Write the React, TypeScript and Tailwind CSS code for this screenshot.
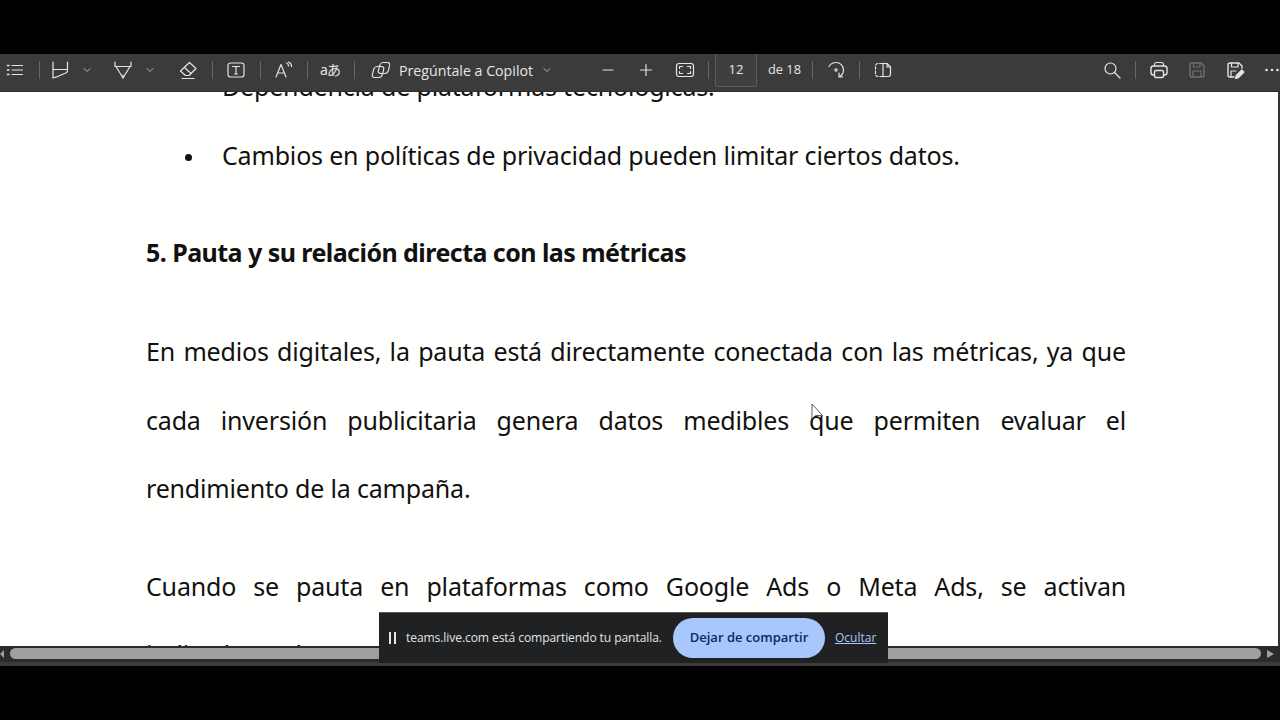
const Sep = ({ ml }: { ml: string }) => <div className={`${ml} w-px h-[18px] bg-[#666666] shrink-0`} />;

const Ico = ({ ml, children, dim }: { ml: string; children: React.ReactNode; dim?: boolean }) => (
  <svg viewBox="0 0 20 20" fill="none" stroke={dim ? "#6f6f6f" : "#e4e4e4"} strokeWidth="1.2" strokeLinecap="round" strokeLinejoin="round" className={`${ml} w-5 h-5 shrink-0`}>
    {children}
  </svg>
);

const Chev = ({ ml }: { ml: string }) => (
  <svg viewBox="0 0 10 10" fill="none" stroke="#b5b5b5" strokeWidth="1" strokeLinecap="round" strokeLinejoin="round" className={`${ml} w-2.5 h-2.5 shrink-0`}>
    <path d="M2 3.5 5 6.5 8 3.5" />
  </svg>
);

function Toolbar() {
  return (
    <div className="h-[38px] shrink-0 bg-[#3b3b3b] border-b border-[#2c2c2c] flex items-center pl-[5px] pb-[6px] overflow-hidden text-[#e6e6e6] font-['Open_Sans',sans-serif]">
      <Ico ml="ml-0"><path d="M7 5.500h10.500M7 10h10.500M7 14.500h10.500" /><path d="M2.500 5.500h1.500M2.500 10h1.500M2.500 14.500h1.500" strokeWidth="1.600" /></Ico>
      <Sep ml="ml-[14px]" />
      <Ico ml="ml-[10px]"><path d="M3 2v16l3-.8 10.800-4.700.7-2V2" /><path d="M3 9.500h14.500" /></Ico>
      <Chev ml="ml-[12px]" />
      <Ico ml="ml-[21px]"><path d="M2 2v4.500h16V2" /><path d="M3 6.500 10 18l7-11.500" /><path d="M10 18v-3" /></Ico>
      <Chev ml="ml-[12px]" />
      <Ico ml="ml-[23px]"><path d="M11.500 2.500 18 8.500l-7 7H7.500L2.500 11z" /><path d="M6.500 7.500l6.500 6" /><path d="M4 18.500h12" /></Ico>
      <Sep ml="ml-[14px]" />
      <Ico ml="ml-[13px]"><rect x="2" y="3" width="16" height="14" rx="2.500" /><path d="M6.500 6.500h7M10 6.500v7.500M8.500 14h3" /></Ico>
      <Sep ml="ml-[14px]" />
      <Ico ml="ml-[13px]"><path d="M2 17 7 4.500 12 17M3.700 13h6.600" /><path d="M12.500 3c1.500.5 2 1.700 2 3M14.500 2c2 .8 3 2.500 3 4.500" /></Ico>
      <Sep ml="ml-[13px]" />
      <div className="ml-[12px] w-5 shrink-0 text-[14px] leading-5 whitespace-nowrap text-center tracking-[-1px] font-['Noto_Sans','Noto_Sans_CJK_JP',sans-serif]">aあ</div>
      <Sep ml="ml-[14px]" />
      <Ico ml="ml-[15px]"><rect x="2.500" y="6.500" width="10" height="11" rx="3" transform="skewX(-14) translate(3.500 0)" /><rect x="8.500" y="2.500" width="10" height="11" rx="3" transform="skewX(-14) translate(2.500 0)" /></Ico>
      <div className="ml-[9px] w-[135px] shrink-0 text-[14.200px] leading-5 pt-[2px] whitespace-nowrap">Pregúntale a Copilot</div>
      <Chev ml="ml-[8px]" />
      <Ico ml="ml-[46px]"><path d="M5 10h10" /></Ico>
      <Ico ml="ml-[18px]"><path d="M4.500 10h11M10 4.500v11" /></Ico>
      <Ico ml="ml-[19px]"><rect x="1.500" y="3.500" width="17" height="13" rx="2.500" /><path d="M4.500 8.500v-2h3M15.500 8.500v-2h-3M4.500 11.500v2h3M15.500 11.500v2h-3" /></Ico>
      <Sep ml="ml-[13px]" />
      <div className="ml-[6px] w-[42px] h-[33px] self-start shrink-0 bg-[#3f3f3f] border-x border-b border-[#5a5a5a] rounded-b-[2px] flex items-center justify-center text-[13px]">12</div>
      <div className="ml-[11px] w-[32px] shrink-0 text-[12.800px] whitespace-nowrap">de 18</div>
      <Sep ml="ml-[12px]" />
      <Ico ml="ml-[13px]"><path d="M3 6.500C4.500 4 7 2.500 10 2.500c4 0 7.500 3.300 7.500 7.500 0 3-1.700 5.300-4 6.500" /><circle cx="10" cy="10" r="1.100" /><path d="M13 13v3.800h3.500" /></Ico>
      <Sep ml="ml-[13px]" />
      <Ico ml="ml-[13px]"><path d="M9 3.500H5A2.500 2.500 0 0 0 2.500 6v8A2.500 2.500 0 0 0 5 16.500h4" strokeDasharray="2.500 1.800" /><path d="M10 3v14M10 3.500h4l3.500 3.500v7a2.500 2.500 0 0 1-2.500 2.500h-5" /><path d="M14 3.500V7h3.500" /></Ico>
      <Ico ml="ml-[209px]"><circle cx="8.500" cy="8.500" r="5.500" /><path d="M12.500 12.500 18 18" /></Ico>
      <Sep ml="ml-[13px]" />
      <Ico ml="ml-[13px]"><path d="M5.500 6V4.500A2 2 0 0 1 7.500 2.500h5a2 2 0 0 1 2 2V6" /><rect x="2" y="6" width="16" height="9" rx="2.500" strokeWidth="1.400" /><rect x="5.500" y="10.500" width="9" height="7" rx="1.500" fill="#3b3b3b" strokeWidth="1.400" /></Ico>
      <Ico ml="ml-[18px]" dim><path d="M3 5a2 2 0 0 1 2-2h9l3 3v9a2 2 0 0 1-2 2H5a2 2 0 0 1-2-2z" strokeWidth="1.400" /><path d="M6.500 3v4h6.500V3M6 17v-6h8v6" /></Ico>
      <Ico ml="ml-[18px]"><path d="M9 17H5a2 2 0 0 1-2-2V5a2 2 0 0 1 2-2h9l3 3v2" strokeWidth="1.400" /><path d="M6.500 3v4h6.500V3M6 17v-6h5" /><path d="M10.500 18.500l.8-3 5.500-5.500 2.200 2.200-5.500 5.500z" fill="#e4e4e4" /></Ico>
      <svg viewBox="0 0 20 20" fill="#e4e4e4" className="ml-[17px] w-5 h-5 shrink-0"><circle cx="4.500" cy="10" r="1.300" /><circle cx="10" cy="10" r="1.300" /><circle cx="15.500" cy="10" r="1.300" /></svg>
    </div>
  );
}

const docFont = "font-['Noto_Sans',sans-serif] text-[25px] leading-[40px] text-[#111] h-10 whitespace-nowrap";

const Bullet = ({ mt, children }: { mt: string; children: string }) => (
  <div className={`${mt} flex items-center pl-[185px]`}>
    <div className="w-[7px] h-[7px] rounded-full bg-[#111] shrink-0 mt-[4px]" />
    <div className={`ml-[30px] ${docFont} tracking-[-0.18px]`}>{children}</div>
  </div>
);

const Just = ({ mt, children, last }: { mt: string; children: string; last?: boolean }) => (
  <div className={`${mt} mx-[146px] w-[980px] ${docFont} ${last ? "" : "[text-align-last:justify]"} tracking-[-0.18px]`}>{children}</div>
);

function ShareBar() {
  return (
    <div className="absolute left-[379px] top-[612px] w-[509px] h-[51px] bg-[#202122] border-t border-[#555] flex items-center pl-[10px] font-['Open_Sans',sans-serif]">
      <div className="w-[2px] h-[12px] bg-[#e6e6e6]" />
      <div className="ml-[3px] w-[2px] h-[12px] bg-[#e6e6e6]" />
      <div className="ml-[10px] text-[12.100px] text-[#e3e3e3] whitespace-nowrap tracking-[-0.1px] w-[256px]">teams.live.com está compartiendo tu pantalla.</div>
      <div className="ml-[11px] w-[152px] h-[40px] rounded-full bg-[#a8c7fa] flex items-center justify-center text-[13px] font-semibold text-[#0b2a5c] whitespace-nowrap">Dejar de compartir</div>
      <div className="ml-[10px] text-[12px] text-[#a8c7fa] underline whitespace-nowrap">Ocultar</div>
    </div>
  );
}

export default function App() {
  return (
    <div className="relative w-[1280px] h-[720px] bg-black overflow-hidden flex flex-col pt-[54px]">
      <Toolbar />
      <div className="h-[554px] shrink-0 flex bg-[#333]">
        <div className="w-[1278px] h-full bg-[#fffffd] overflow-hidden">
          <Bullet mt="-mt-[26px]">Dependencia de plataformas tecnológicas.</Bullet>
          <Bullet mt="mt-[29px]">Cambios en políticas de privacidad pueden limitar ciertos datos.</Bullet>
          <div className={`mt-[57px] ml-[146px] ${docFont} font-bold tracking-[-0.55px]`}>5. Pauta y su relación directa con las métricas</div>
          <Just mt="mt-[59px]">En medios digitales, la pauta está directamente conectada con las métricas, ya que</Just>
          <Just mt="mt-[29px]">cada inversión publicitaria genera datos medibles que permiten evaluar el</Just>
          <Just mt="mt-[28px]" last>rendimiento de la campaña.</Just>
          <Just mt="mt-[58px]">Cuando se pauta en plataformas como Google Ads o Meta Ads, se activan</Just>
          <Just mt="mt-[28px]" last>indicadores de</Just>
        </div>
      </div>
      <div className="h-[20px] shrink-0 bg-[#2b2b2b] flex items-start pt-[2px] relative">
        <div className="w-0 h-0 mt-[2px] border-y-[4px] border-y-transparent border-r-[4px] border-r-[#a0a0a0]" />
        <div className="ml-[6px] w-[1251px] h-[11px] rounded-full bg-[#a0a0a0]" />
        <div className="ml-[6px] mt-[2px] w-0 h-0 border-y-[4px] border-y-transparent border-l-[7px] border-l-[#a0a0a0]" />
        <div className="absolute left-0 right-0 bottom-0 h-[4px] bg-[#3b3b3b]" />
      </div>
      <ShareBar />
      <svg viewBox="0 0 14 20" className="absolute left-[811px] top-[403px] w-[14px] h-[20px]" fill="none" stroke="#333" strokeWidth="0.8">
        <path d="M1 1v15l3.500-3.500h7z" fill="#ffffff" fillOpacity="0.7" />
      </svg>
    </div>
  );
}
